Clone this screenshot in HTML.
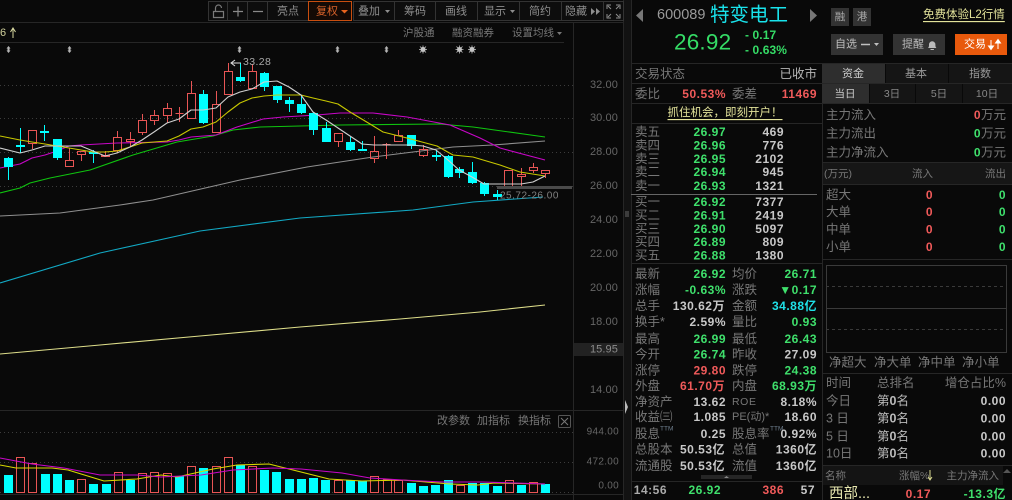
<!DOCTYPE html>
<html><head><meta charset="utf-8"><style>
html,body{margin:0;padding:0;background:#090909;overflow:hidden}
svg{display:block;width:1012px;height:500px}
text{font-family:"Liberation Sans","Noto Sans CJK SC",sans-serif;dominant-baseline:central}
.l{font-size:12.5px;fill:#777}
.s{font-size:10.5px;fill:#777}
.b{font-size:11px;fill:#8e8e8e}
.n{font-size:12px;font-weight:bold;letter-spacing:.5px;text-anchor:end}
.g{fill:#3fe06c}.r{fill:#f05a5a}.w{fill:#c8c8c8}.c{fill:#1fe0e8}
.a{font-size:11px;fill:#666;letter-spacing:.1px;text-anchor:end}
.e{text-anchor:end}.m{text-anchor:middle}
.ln{stroke:#262626;stroke-width:1;fill:none;shape-rendering:crispEdges}
.d{stroke:#3c3c3c;stroke-width:1;stroke-dasharray:1 3;fill:none;shape-rendering:crispEdges}
.p{fill:none;stroke-width:1.1;stroke-linejoin:round}
</style></head><body>
<svg xmlns="http://www.w3.org/2000/svg" width="1012" height="500" viewBox="0 0 1012 500">
<rect width="1012" height="500" fill="#090909"/>

<!-- frame lines -->
<path class="ln" d="M0 22.5H623M0 42.5H564M0 410.5H623M0 494.5H623M573.5 22V500M623.5 0V500M631.5 0V500"/>
<rect x="624" y="0" width="7" height="500" fill="#121212"/>
<path d="M625 400v14l3-7z" fill="#bbb"/>
<path d="M625 212h4M625 214h4M625 216h4" stroke="#666"/>

<!-- toolbar -->
<g fill="#0d0d0d" stroke="#333" shape-rendering="crispEdges">
<rect x="208.500" y="1.500" width="19" height="19"/><rect x="227.500" y="1.500" width="20" height="19"/><rect x="247.500" y="1.500" width="20" height="19"/><rect x="267.500" y="1.500" width="41" height="19"/>
<rect x="353.500" y="1.500" width="41" height="19"/><rect x="394.500" y="1.500" width="41" height="19"/><rect x="435.500" y="1.500" width="42" height="19"/><rect x="477.500" y="1.500" width="42" height="19"/><rect x="519.500" y="1.500" width="42" height="19"/><rect x="561.500" y="1.500" width="42" height="19"/><rect x="603.500" y="1.500" width="20" height="19"/>
</g>
<rect x="308.500" y="1.500" width="43" height="19" fill="#140a05" stroke="#c94e0f"/>
<path d="M213.500 11.500h10v6h-10zM215.500 11V8a3 3 0 0 1 6 0" fill="none" stroke="#7a7a7a" stroke-width="1.200"/>
<path d="M233 11.500h10M238 6.500v10M253 11.500h10" stroke="#8a8a8a" stroke-width="1.200" fill="none"/>
<text class="b m" x="288" y="11.500">亮点</text>
<text class="b" x="316" y="11.500" style="fill:#d9632a">复权</text>
<text class="b" x="358" y="11.500">叠加</text>
<text class="b m" x="415" y="11.500">筹码</text>
<text class="b m" x="456" y="11.500">画线</text>
<text class="b" x="484" y="11.500">显示</text>
<text class="b m" x="540" y="11.500">简约</text>
<text class="b" x="565" y="11.500">隐藏</text>
<path d="M341 10h7l-3.500 3.500z" fill="#e8641e"/>
<path d="M385 10h5l-2.500 3z M510 10h5l-2.500 3z" fill="#8e8e8e"/>
<path d="M591 8v7l4-3.500zM596 8v7l4-3.500z" fill="#8e8e8e"/>
<path d="M607 9V5h4M616 5h4v4M607 14v4h4M620 14v4h-4M608 6l3 3M619 6l-3 3M608 17l3-3M619 17l-3-3" stroke="#8e8e8e" fill="none"/>

<!-- second row -->
<text x="0" y="33" font-size="11" fill="#cfcf9a">6</text>
<path d="M13 38V28M10.500 32l2.500-4 2.500 4" stroke="#d8d8a0" fill="none"/>
<text class="s" x="403" y="33">沪股通</text>
<text class="s" x="452" y="33">融资融券</text>
<text class="s" x="512" y="33">设置均线</text>
<path d="M557 32h5l-2.500 3z" fill="#777"/>

<!-- markers -->
<path d="M8.500 46l2 2.500h-1v2h1l-2 2.500-2-2.500h1v-2h-1zM69.500 46l2 2.500h-1v2h1l-2 2.500-2-2.500h1v-2h-1zM239.500 46l2 2.500h-1v2h1l-2 2.500-2-2.500h1v-2h-1zM337.500 46l2 2.500h-1v2h1l-2 2.500-2-2.500h1v-2h-1zM386.500 46l2 2.500h-1v2h1l-2 2.500-2-2.500h1v-2h-1z" fill="#b5b5b5"/>
<g fill="#c4c4c4"><circle cx="423" cy="49.500" r="2.500"/><circle cx="459.500" cy="49.500" r="2.500"/><circle cx="472" cy="49.500" r="2.500"/></g>
<path d="M419 49.500h8M423 45.500v8M420 46.500l6 6M426 46.500l-6 6M455.500 49.500h8M459.500 45.500v8M456.500 46.500l6 6M462.500 46.500l-6 6M468 49.500h8M472 45.500v8M469 46.500l6 6M475 46.500l-6 6" stroke="#c4c4c4" stroke-width=".8"/>

<!-- grid -->
<path class="d" d="M0 85.500H573M0 118.500H573M0 152.500H573M0 186.500H573M0 432.500H573M0 462.500H573M0 492.500H573"/>

<!-- y labels -->
<text class="a" x="618" y="85">32.00</text>
<text class="a" x="618" y="118">30.00</text>
<text class="a" x="618" y="152">28.00</text>
<text class="a" x="618" y="186">26.00</text>
<text class="a" x="618" y="220">24.00</text>
<text class="a" x="618" y="254">22.00</text>
<text class="a" x="618" y="288">20.00</text>
<text class="a" x="618" y="322">18.00</text>
<rect x="574" y="343" width="49" height="13" fill="#222"/>
<text class="a" x="618" y="349.500" style="fill:#8c8c8c">15.95</text>
<text class="a" x="618" y="390">14.00</text>
<text class="a" x="619" y="432" style="font-size:10px;letter-spacing:.3px">944.00</text>
<text class="a" x="619" y="462" style="font-size:10px;letter-spacing:.3px">472.00</text>
<text class="a" x="619" y="486" style="font-size:10px;letter-spacing:.3px">0.00</text>

<!-- long MAs -->
<polyline class="p" stroke="#dede8a" points="0,354 100,345 200,336 300,327 400,319 480,312 545,305"/>
<polyline class="p" stroke="#12a9c4" points="0,283 100,253 200,231 300,218 413,210 473,202 543,197"/>
<polyline class="p" stroke="#8f8f8f" points="0,216 60,213 120,205 153,200 240,180 307,167 373,157 453,147 493,145 545,141"/>
<polyline class="p" stroke="#0fc40f" points="0,193 20,188 30,183 50,178 90,170 133,155 177,142 213,136 233,130 260,127 300,126 340,125 440,124 473,127 545,137"/>
<polyline class="p" stroke="#c806c8" points="0,168 20,164 32,158 45,155 57,151 69,146 81,145 117,143 167,142 179,140 191,137 216,135 237,127 263,119 283,117 317,115 340,113 373,113 407,117 450,125 480,138 500,148 545,160"/>

<!-- candles -->
<path shape-rendering="crispEdges" fill="#00ffff" stroke="#00ffff" d="M8.500 157V180M4.500 158.500h8v8h-8zM20.500 128V153M16.500 145.500h8v1h-8zM44.500 125V141M40.500 131.500h8v1h-8zM57.500 139V160M53.500 139.500h8v18h-8zM93.500 150V163M89.500 152.500h8v1h-8zM203.500 90V124M199.500 94.500h8v28h-8zM240.500 63V82M236.500 77.500h8v3h-8zM264.500 72V91M260.500 73.500h8v13h-8zM277.500 86V103M273.500 86.500h8v13h-8zM289.500 97V112M285.500 100.500h8v3h-8zM301.500 95V114M297.500 104.500h8v8h-8zM313.500 112V135M309.500 113.500h8v16h-8zM326.500 122V142M322.500 128.500h8v13h-8zM350.500 137V151M346.500 142.500h8v7h-8zM362.500 141V151M358.500 149.500h8v1h-8zM411.500 135V149M407.500 135.500h8v10h-8zM436.500 150V161M432.500 155.500h8v1h-8zM448.500 155V178M444.500 156.500h8v20h-8zM459.500 167V178M455.500 169.500h8v3h-8zM472.500 162V184M468.500 172.500h8v10h-8zM484.500 182V196M480.500 183.500h8v10h-8zM497.500 190V200M493.500 194.500h8v2h-8z"/>
<path shape-rendering="crispEdges" fill="none" stroke="#e85555" d="M32.500 144V149M28.500 130.500h8v13h-8zM69.500 148V160M65.500 160.500h8v6h-8zM81.500 155V161M77.500 151.500h8v3h-8zM105.500 151V155M101.500 155.500h8v1h-8zM117.500 131V137M117.500 151V153M113.500 137.500h8v13h-8zM130.500 132V139M130.500 142V147M126.500 139.500h8v2h-8zM142.500 114V120M142.500 133V135M138.500 120.500h8v12h-8zM154.500 110V115M154.500 120V125M150.500 115.500h8v5h-8zM167.500 103V108M167.500 116V123M163.500 108.500h8v7h-8zM179.500 107V122M175.500 113.500h8M191.500 81V93M187.500 93.500h8v25h-8zM216.500 91V104M212.500 104.500h8v28h-8zM228.500 63V71M224.500 71.500h8v23h-8zM252.500 64V71M248.500 71.500h8v17h-8zM338.500 141V147M334.500 133.500h8v8h-8zM374.500 136V151M374.500 159V163M370.500 151.500h8v7h-8zM386.500 143V159M382.500 144.500h8M398.500 130V135M394.500 135.500h8v6h-8zM423.500 145V149M423.500 156V157M419.500 149.500h8v6h-8zM504.500 170.500h8v16h-8zM521.500 168V174M521.500 176V187M517.500 174.500h8v2h-8zM533.500 163V167M533.500 170V173M529.500 167.500h8v3h-8zM545.500 174V178M541.500 170.500h8v3h-8z"/>

<!-- short MAs -->
<polyline class="p" stroke="#c8c800" points="0,136 20,140 32,142 45,144 57,146 69,148 81,150 93,152 105,152 117,151 130,147 142,143 154,142 167,141 179,136 191,129 203,127 216,122 228,112 240,103 252,98 264,96 277,95 301,95 313,98 326,101 338,104 350,112 370,124 383,132 407,138 437,146 453,155 473,157 500,165 520,172 545,176"/>
<polyline class="p" stroke="#d0d0d0" points="0,148 20,153 32,150 45,146 81,146 93,151 105,156 117,153 130,147 142,140 154,132 167,123 179,119 191,110 203,110 216,108 228,97 240,92 252,89 264,82 277,81 289,87 301,95 313,112 326,120 338,128 350,136 362,144 374,145 411,145 423,146 436,150 448,160 459,170 472,177 484,184 521,184 533,182 545,176"/>

<rect x="497" y="186" width="75" height="3" fill="#4a4a4a"/>
<text x="500" y="196" font-size="10" fill="#808080" letter-spacing=".5">25.72-26.00</text>
<text x="243" y="62" font-size="10.500" fill="#a8a8a8" letter-spacing=".4">33.28</text>
<path d="M241 63H231M235 60l-4 3 4 3" stroke="#ddd" fill="none"/>

<!-- vol panel header -->
<text class="s" x="437" y="421" style="font-size:11px">改参数</text>
<text class="s" x="477" y="421" style="font-size:11px">加指标</text>
<text class="s" x="518" y="421" style="font-size:11px">换指标</text>
<rect x="558.500" y="415.500" width="12" height="12" rx="1" fill="none" stroke="#555"/>
<path d="M561 418l7 7M568 418l-7 7" stroke="#777"/>

<!-- vols -->
<path shape-rendering="crispEdges" fill="#00ffff" d="M4 475h9v18h-9zM41 474h9v19h-9zM53 474h9v19h-9zM65 480h9v13h-9zM89 484h9v9h-9zM102 484h9v9h-9zM126 480h9v13h-9zM175 476h9v17h-9zM199 468h9v25h-9zM236 465h9v28h-9zM260 470h9v23h-9zM272 472h9v21h-9zM285 479h9v14h-9zM297 479h9v14h-9zM309 478h9v15h-9zM321 480h9v13h-9zM346 480h9v13h-9zM358 481h9v12h-9zM407 483h9v10h-9zM419 486h9v7h-9zM431 485h9v8h-9zM444 480h9v13h-9zM468 483h9v10h-9zM480 483h9v10h-9zM493 486h9v7h-9zM517 485h9v8h-9zM541 484h9v9h-9z"/>
<path shape-rendering="crispEdges" fill="none" stroke="#e85555" d="M16.500 457.500h8v35h-8zM28.500 463.500h8v29h-8zM77.500 479.500h8v13h-8zM114.500 472.500h8v20h-8zM138.500 473.500h8v19h-8zM150.500 472.500h8v20h-8zM163.500 473.500h8v19h-8zM187.500 466.500h8v26h-8zM212.500 466.500h8v26h-8zM224.500 457.500h8v35h-8zM248.500 466.500h8v26h-8zM334.500 480.500h8v12h-8zM370.500 476.500h8v16h-8zM383.500 479.500h8v13h-8zM394.500 480.500h8v12h-8zM456.500 485.500h8v7h-8zM505.500 480.500h8v12h-8zM529.500 482.500h8v10h-8z"/>
<polyline class="p" stroke="#d8d800" points="0,465 16,468 52,468 68,470 104,481 137,479 161,475 177,477 213,469 237,465 269,464 289,469 329,479 362,481 402,480 426,482 450,484 478,485 494,483 545,484"/>
<polyline class="p" stroke="#c806c8" points="0,458 16,461 32,464 64,468 100,475 137,475 161,477 201,475 233,470 273,468 301,469 342,473 370,478 402,480 442,482 482,482 545,484"/>

<!-- quote header -->
<path d="M643 9v13l-7-6.500z" fill="#777"/>
<path d="M810 9v13l7-6.500z" fill="#777"/>
<text x="657" y="15" font-size="14.500" fill="#9a9a9a">600089</text>
<text x="710" y="15" font-size="19.500" fill="#19e3ec">特变电工</text>
<rect x="831" y="8" width="18" height="18" fill="#333"/><rect x="853" y="8" width="18" height="18" fill="#333"/>
<text class="m" x="840" y="17" font-size="10.500" fill="#aaa">融</text>
<text class="m" x="862" y="17" font-size="10.500" fill="#aaa">港</text>
<text x="923" y="15" font-size="11.500" fill="#e2e29a" text-decoration="underline">免费体验L2行情</text>
<text x="674" y="42" font-size="22.500" fill="#35dc66" letter-spacing=".2">26.92</text>
<text x="745" y="35" font-size="12" font-weight="bold" fill="#35dc66" letter-spacing=".1">- 0.17</text>
<text x="745" y="50" font-size="12" font-weight="bold" fill="#35dc66" letter-spacing=".1">- 0.63%</text>
<rect x="831" y="34" width="52" height="21" fill="#333"/><rect x="893" y="34" width="52" height="21" fill="#333"/><rect x="955" y="34" width="52" height="21" fill="#e8590c"/>
<text x="835" y="44.500" font-size="11" fill="#c0c0c0">自选</text>
<path d="M861 44.500h9" stroke="#c0c0c0" stroke-width="1.500"/><path d="M874 43h5l-2.500 3z" fill="#c0c0c0"/>
<text x="902" y="44.500" font-size="11" fill="#bbb">提醒</text>
<path d="M928 48c1-1 1-2 1-3.500a3.200 3.200 0 0 1 6.400 0c0 1.500 0 2.500 1 3.500zM930.500 49h3.400v1h-3.400z" fill="#bbb"/>
<text x="964" y="44.500" font-size="11" fill="#fff">交易</text>
<path d="M991 40v9M988.500 46l2.500 3.500 2.500-3.500zM998 49v-9M995.500 43l2.500-3.500 2.500 3.500z" stroke="#fff" fill="#fff"/>

<path class="ln" d="M631 63.500H1012M631 83.500H1012M631 103.500H1012M631 123.500H822M822.500 63V500M631 263.500H822M631 481.500H822"/>
<path d="M631 194.500H817" stroke="#666" shape-rendering="crispEdges"/>

<text class="l" x="635" y="74">交易状态</text>
<text class="l e" x="817" y="74" style="fill:#b5b5b5">已收市</text>
<text class="l" x="635" y="94">委比</text>
<text class="n r" x="726" y="94">50.53%</text>
<text class="l" x="732" y="94">委差</text>
<text class="n r" x="817" y="94">11469</text>
<text class="m" x="725" y="113" font-size="11.500" fill="#e2e29a" text-decoration="underline">抓住机会，即刻开户！</text>

<!-- tabs -->
<rect x="822" y="64" width="63" height="19" fill="#2e2e2e"/><rect x="886" y="64" width="62" height="19" fill="#151515"/><rect x="949" y="64" width="63" height="19" fill="#151515"/>
<rect x="822" y="84" width="47" height="19" fill="#2e2e2e"/><rect x="870" y="84" width="45" height="19" fill="#151515"/><rect x="916" y="84" width="46" height="19" fill="#151515"/><rect x="963" y="84" width="49" height="19" fill="#151515"/>
<text class="m" x="853" y="74" font-size="11" fill="#ccc">资金</text>
<text class="m" x="916" y="74" font-size="11" fill="#999">基本</text>
<text class="m" x="980" y="74" font-size="11" fill="#999">指数</text>
<text class="m" x="845" y="94" font-size="10.500" fill="#ccc">当日</text>
<text class="m" x="892" y="94" font-size="10.500" fill="#888">3日</text>
<text class="m" x="939" y="94" font-size="10.500" fill="#888">5日</text>
<text class="m" x="987" y="94" font-size="10.500" fill="#888">10日</text>

<!-- order book -->
<g>
<text class="l" x="635" y="132">卖五</text><text class="n g" x="726" y="132">26.97</text><text class="n w" x="784" y="132">469</text>
<text class="l" x="635" y="145.500">卖四</text><text class="n g" x="726" y="145.500">26.96</text><text class="n w" x="784" y="145.500">776</text>
<text class="l" x="635" y="159">卖三</text><text class="n g" x="726" y="159">26.95</text><text class="n w" x="784" y="159">2102</text>
<text class="l" x="635" y="172">卖二</text><text class="n g" x="726" y="172">26.94</text><text class="n w" x="784" y="172">945</text>
<text class="l" x="635" y="186">卖一</text><text class="n g" x="726" y="186">26.93</text><text class="n w" x="784" y="186">1321</text>
<text class="l" x="635" y="202">买一</text><text class="n g" x="726" y="202">26.92</text><text class="n w" x="784" y="202">7377</text>
<text class="l" x="635" y="215.500">买二</text><text class="n g" x="726" y="215.500">26.91</text><text class="n w" x="784" y="215.500">2419</text>
<text class="l" x="635" y="229">买三</text><text class="n g" x="726" y="229">26.90</text><text class="n w" x="784" y="229">5097</text>
<text class="l" x="635" y="242">买四</text><text class="n g" x="726" y="242">26.89</text><text class="n w" x="784" y="242">809</text>
<text class="l" x="635" y="255.500">买五</text><text class="n g" x="726" y="255.500">26.88</text><text class="n w" x="784" y="255.500">1380</text>
</g>

<!-- stats -->
<g>
<text class="l" x="635" y="274">最新</text><text class="n g" x="726" y="274">26.92</text><text class="l" x="732" y="274">均价</text><text class="n g" x="817" y="274">26.71</text>
<text class="l" x="635" y="290">涨幅</text><text class="n g" x="726" y="290">-0.63%</text><text class="l" x="732" y="290">涨跌</text><text class="n g" x="817" y="290">▼0.17</text>
<text class="l" x="635" y="306">总手</text><text class="n w" x="725" y="306">130.62万</text><text class="l" x="732" y="306">金额</text><text class="n c" x="817" y="306">34.88亿</text>
<text class="l" x="635" y="322">换手*</text><text class="n w" x="726" y="322">2.59%</text><text class="l" x="732" y="322">量比</text><text class="n g" x="817" y="322">0.93</text>
<text class="l" x="635" y="339">最高</text><text class="n g" x="726" y="339">26.99</text><text class="l" x="732" y="339">最低</text><text class="n g" x="817" y="339">26.43</text>
<text class="l" x="635" y="354.500">今开</text><text class="n g" x="726" y="354.500">26.74</text><text class="l" x="732" y="354.500">昨收</text><text class="n w" x="817" y="354.500">27.09</text>
<text class="l" x="635" y="370.500">涨停</text><text class="n r" x="726" y="370.500">29.80</text><text class="l" x="732" y="370.500">跌停</text><text class="n g" x="817" y="370.500">24.38</text>
<text class="l" x="635" y="386">外盘</text><text class="n r" x="725" y="386">61.70万</text><text class="l" x="732" y="386">内盘</text><text class="n g" x="817" y="386">68.93万</text>
<text class="l" x="635" y="402">净资产</text><text class="n w" x="726" y="402">13.62</text><text class="s" x="732" y="402" style="letter-spacing:.6px">ROE</text><text class="n w" x="817" y="402">8.18%</text>
<text class="l" x="635" y="417">收益㈢</text><text class="n w" x="726" y="417">1.085</text><text class="s" x="732" y="417" style="font-size:11px">PE(动)*</text><text class="n w" x="817" y="417">18.60</text>
<text class="l" x="635" y="434">股息</text><text x="660" y="429" font-size="6.500" fill="#6f7f8f">TTM</text><text class="n w" x="726" y="434">0.25</text><text class="l" x="732" y="434">股息率</text><text x="770" y="429" font-size="6.500" fill="#6f7f8f">TTM</text><text class="n w" x="817" y="434">0.92%</text>
<text class="l" x="635" y="449.500">总股本</text><text class="n w" x="725" y="449.500">50.53亿</text><text class="l" x="732" y="449.500">总值</text><text class="n w" x="817" y="449.500">1360亿</text>
<text class="l" x="635" y="466">流通股</text><text class="n w" x="725" y="466">50.53亿</text><text class="l" x="732" y="466">流值</text><text class="n w" x="817" y="466">1360亿</text>
</g>
<rect x="701" y="475" width="51" height="4" fill="#262626"/><path d="M724 478h5l-2.500-2z" fill="#888"/>
<text class="n w" x="667" y="490" style="fill:#aaa">14:56</text>
<text class="n g" x="721" y="490">26.92</text>
<text class="n r" x="784" y="490">386</text>
<text class="n w" x="815" y="490">57</text>

<!-- right panel -->
<text class="l" x="826" y="115">主力流入</text>
<text class="l" x="826" y="133.500">主力流出</text>
<text class="l" x="826" y="152.500">主力净流入</text>
<text class="l e" x="1006" y="115">万元</text><text class="n r" x="981" y="115">0</text>
<text class="l e" x="1006" y="133.500">万元</text><text class="n g" x="981" y="133.500">0</text>
<text class="l e" x="1006" y="152.500">万元</text><text class="n g" x="981" y="152.500">0</text>
<rect x="823" y="163" width="189" height="21" fill="#161616"/>
<path class="ln" d="M822 162.500H1012M822 184.500H1012M822 259.500H1012M822 373.500H1012M822 465.500H1012"/>
<text class="s" x="824" y="174">(万元)</text>
<text class="s e" x="933" y="174">流入</text>
<text class="s e" x="1006" y="174">流出</text>
<text class="l" x="826" y="195">超大</text><text class="n r" x="933" y="195">0</text><text class="n g" x="1006" y="195">0</text>
<text class="l" x="826" y="212">大单</text><text class="n r" x="933" y="212">0</text><text class="n g" x="1006" y="212">0</text>
<text class="l" x="826" y="229.500">中单</text><text class="n r" x="933" y="229.500">0</text><text class="n g" x="1006" y="229.500">0</text>
<text class="l" x="826" y="247">小单</text><text class="n r" x="933" y="247">0</text><text class="n g" x="1006" y="247">0</text>

<rect x="826.500" y="265.500" width="180" height="87" fill="none" stroke="#3a3a3a" shape-rendering="crispEdges"/>
<path d="M826 308.500H1006" stroke="#3a3a3a" shape-rendering="crispEdges"/>
<path d="M826 286.500H1006M826 329.500H1006" stroke="#3a3a3a" stroke-dasharray="3 3" shape-rendering="crispEdges"/>
<text class="l" x="829" y="362.500">净超大</text>
<text class="l" x="874" y="362.500">净大单</text>
<text class="l" x="918" y="362.500">净中单</text>
<text class="l" x="962" y="362.500">净小单</text>

<text class="l" x="826" y="383">时间</text>
<text class="l" x="877" y="383">总排名</text>
<text class="l e" x="1006" y="383">增仓占比%</text>
<g>
<text class="l" x="826" y="401">今日</text><text class="l" x="877" y="401" style="fill:#bbb">第<tspan font-weight="bold">0</tspan>名</text><text class="n w" x="1006" y="401">0.00</text>
<text class="l" x="826" y="418.500">3 日</text><text class="l" x="877" y="418.500" style="fill:#bbb">第<tspan font-weight="bold">0</tspan>名</text><text class="n w" x="1006" y="418.500">0.00</text>
<text class="l" x="826" y="436.500">5 日</text><text class="l" x="877" y="436.500" style="fill:#bbb">第<tspan font-weight="bold">0</tspan>名</text><text class="n w" x="1006" y="436.500">0.00</text>
<text class="l" x="826" y="453.500">10日</text><text class="l" x="877" y="453.500" style="fill:#bbb">第<tspan font-weight="bold">0</tspan>名</text><text class="n w" x="1006" y="453.500">0.00</text>
</g>
<rect x="823" y="466" width="180" height="19" fill="#141414"/>
<text class="s" x="825" y="476">名称</text>
<text class="s" x="899" y="476">涨幅%</text>
<path d="M930 470v10M928 477l2 3 2-3" stroke="#d8d890" fill="none"/>
<text class="s e" x="999" y="476">主力净流入</text>
<path d="M1003 473l4-4 4 4z" fill="#555"/>
<text x="829" y="494" font-size="14.500" fill="#e8e8b0">西部...</text>
<text class="n r" x="931" y="494">0.17</text>
<text class="n g" x="1006" y="494">-13.3亿</text>
</svg>
</body></html>
